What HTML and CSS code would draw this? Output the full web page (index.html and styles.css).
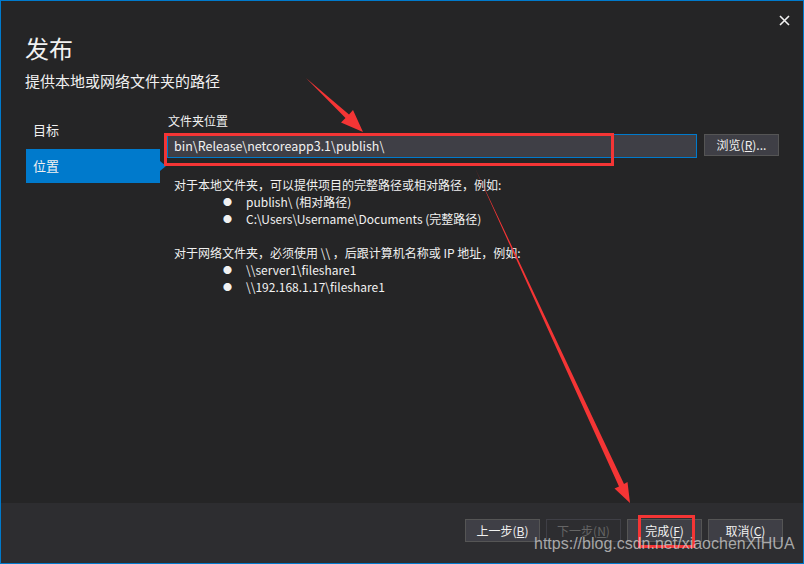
FILE: index.html
```html
<!DOCTYPE html>
<html lang="zh-CN">
<head>
<meta charset="utf-8">
<title>发布</title>
<link rel="stylesheet" href="styles.css">
</head>
<body>
<div class="window">
  <div class="main">
    <header class="head">
      <div class="head-text">
        <h1 class="title">发布</h1>
        <p class="subtitle">提供本地或网络文件夹的路径</p>
      </div>
      <button class="close" aria-label="关闭">
        <svg width="11" height="11" viewBox="0 0 11 11"><path d="M1 1 L10 10 M10 1 L1 10" stroke="#f1f1f1" stroke-width="1.6" fill="none"/></svg>
      </button>
    </header>
    <div class="body">
      <nav class="side">
        <div class="nav-item">目标</div>
        <div class="nav-item active">位置</div>
      </nav>
      <section class="content">
        <div class="label">文件夹位置</div>
        <div class="row">
          <div class="input">bin\Release\netcoreapp3.1\publish\</div>
          <button class="btn browse">浏览(<u>R</u>)...</button>
        </div>
        <div class="desc">
          <div class="line">对于本地文件夹，可以提供项目的完整路径或相对路径，例如:</div>
          <div class="bullet"><span class="dot">●</span><span>publish\ (相对路径)</span></div>
          <div class="bullet"><span class="dot">●</span><span>C:\Users\Username\Documents (完整路径)</span></div>
          <div class="line blank"></div>
          <div class="line">对于网络文件夹，必须使用 \\ ，后跟计算机名称或 IP 地址，例如:</div>
          <div class="bullet"><span class="dot">●</span><span>\\server1\fileshare1</span></div>
          <div class="bullet"><span class="dot">●</span><span>\\192.168.1.17\fileshare1</span></div>
        </div>
      </section>
    </div>
  </div>
  <footer class="foot">
    <button class="btn">上一步(<u>B</u>)</button>
    <button class="btn disabled">下一步(<u>N</u>)</button>
    <button class="btn">完成(<u>F</u>)</button>
    <button class="btn">取消(<u>C</u>)</button>
  </footer>
  <div class="box box-input"></div>
  <div class="box box-finish"></div>
  <svg class="arrows" width="804" height="564" viewBox="0 0 804 564">
    <polygon fill="#f43535" points="306,78 349,114.5 353,110 363,132 341,122.5 345.5,118"/>
    <polygon fill="#f43535" points="475,168 624,484 627.5,482 630,503 614.5,488.5 619,486.5"/>
  </svg>
  <div class="watermark">https://blog.csdn.net/xiaochenXIHUA</div>
</div>
</body>
</html>
```

FILE: styles.css
```css
* { box-sizing: border-box; }
html, body { margin: 0; padding: 0; background: #252526; }
body {
  font-family: "Noto Sans CJK SC", "Microsoft YaHei", sans-serif;
  color: #f1f1f1;
}
.window {
  position: relative;
  width: 804px;
  height: 564px;
  border: 1px solid #007acc;
  background: #252526;
  display: flex;
  flex-direction: column;
  overflow: hidden;
}
.main { flex: 1; display: flex; flex-direction: column; }
.head {
  display: flex;
  justify-content: space-between;
  align-items: flex-start;
  padding: 31px 0 0 24px;
}
.title {
  margin: 0;
  font-size: 24px;
  line-height: 32px;
  font-weight: normal;
}
.subtitle {
  margin: 7px 0 0;
  font-size: 15px;
  line-height: 20px;
}
.close {
  margin: -17px 13px 0 0;
  width: 11px; height: 11px;
  padding: 0; border: 0; background: none;
  display: block;
}
.close svg { display: block; }
.body {
  display: flex;
  gap: 7px;
  padding: 22px 24px 0 25px;
}
.side { width: 134px; display: flex; flex-direction: column; gap: 2px; }
.nav-item {
  position: relative;
  height: 34px;
  line-height: 34px;
  padding-left: 7px;
  font-size: 13px;
}
.nav-item.active { background: #007acc; }
.nav-item.active::after {
  content: "";
  position: absolute;
  right: -6px; top: 12px;
  border-left: 6px solid #007acc;
  border-top: 5px solid transparent;
  border-bottom: 5px solid transparent;
}
.content { flex: 1; }
.label { font-size: 12px; line-height: 16px; padding-left: 1px; }
.row { display: flex; gap: 7px; margin-top: 5px; align-items: flex-start; }
.input {
  flex: 1;
  height: 24px;
  border: 1px solid #007acc;
  background: #3f3f46;
  padding-left: 6px;
  font-size: 12.5px;
  line-height: 22px;
}
.btn {
  font-family: inherit;
  width: 75px;
  height: 23px;
  padding: 0;
  border: 1px solid #555555;
  background: #3f3f46;
  color: #f1f1f1;
  font-size: 12px;
  line-height: 21px;
}
.browse { height: 22px; line-height: 20px; }
.desc { margin-top: 18px; padding-left: 7px; font-size: 12px; line-height: 17px; }
.line.blank { height: 17px; }
.bullet { display: flex; }
.dot { width: 72px; padding-left: 49px; font-size: 9px; }
.foot {
  height: 60px;
  background: #2d2d30;
  display: flex;
  justify-content: flex-end;
  align-items: flex-start;
  gap: 6px;
  padding: 16px 20px 0 0;
}
.btn.disabled { background: #2d2d30; border-color: #3f3f46; color: #656565; }
.box { position: absolute; border: 3px solid #f43535; }
.box-input { left: 163px; top: 132px; width: 450px; height: 33px; }
.box-finish { left: 637px; top: 514px; width: 57px; height: 33px; }
.arrows { position: absolute; left: -1px; top: -1px; pointer-events: none; }
.watermark {
  position: absolute;
  left: 533px; top: 533px;
  font-family: "Liberation Sans", Arial, sans-serif;
  font-size: 16px;
  line-height: 20px;
  color: rgba(215, 215, 215, 0.72);
}
```
